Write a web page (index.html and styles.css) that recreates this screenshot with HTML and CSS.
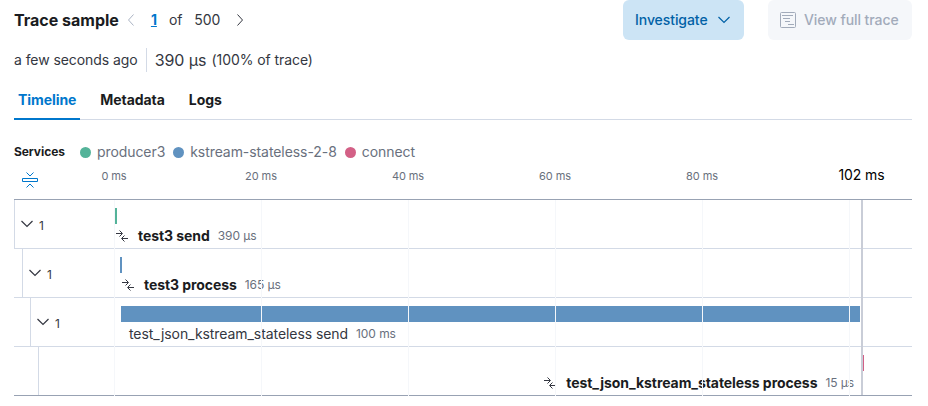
FILE: index.html
```html
<!DOCTYPE html>
<html lang="en">
<head>
<meta charset="utf-8">
<title>Trace sample</title>
<link rel="stylesheet" href="styles.css">
</head>
<body>
<svg width="0" height="0" class="defs">
  <symbol id="down" viewBox="0 0 16 16"><path d="M2.5 5 8 10.5 13.5 5" fill="none" stroke="currentColor" stroke-width="1.2"/></symbol>
  <symbol id="merge" viewBox="0 0 12 12"><path d="M0 3.5h6M3.5.5l3 3-3 3M12 8.5H6M8.500 5.500l-3 3 3 3" fill="none" stroke="currentColor"/></symbol>
</svg>
<main class="panel">
  <header class="head">
    <h2 class="title">Trace sample</h2>
    <nav class="pager">
      <svg class="arrow off" viewBox="0 0 8 14"><path d="M6.500 1.500 1.500 7l5 5.500"/></svg>
      <a class="page">1</a><span class="of">of</span><span class="total">500</span>
      <svg class="arrow" viewBox="0 0 8 14"><path d="m1.500 1.500 5 5.500-5 5.500"/></svg>
    </nav>
    <div class="actions">
      <button class="btn primary">Investigate<svg class="caret"><use href="#down"/></svg></button>
      <button class="btn disabled"><svg class="apm" viewBox="0 0 16 16"><rect x=".5" y=".5" width="15" height="15" rx="1"/><path d="M2 3.500h11M3 6.500h7M5 9.500h5M8 12.500h6"/></svg>View full trace</button>
    </div>
  </header>
  <div class="summary"><span class="ago">a few seconds ago</span><span class="duration">390 μs</span><span>(100% of trace)</span></div>
  <nav class="tabs"><a class="tab active">Timeline</a><a class="tab">Metadata</a><a class="tab">Logs</a></nav>
  <div class="legend">
    <b>Services</b>
    <span class="item"><i class="dot green"></i>producer3</span>
    <span class="item"><i class="dot blue"></i>kstream-stateless-2-8</span>
    <span class="item"><i class="dot pink"></i>connect</span>
  </div>
  <div class="axis">
    <svg class="fold" viewBox="0 0 16 16"><path d="M4.500.5 8 4 11.500.5M4.500 15.500 8 12l3.500 3.500M.5 6.500h15v3H.5z"/></svg>
    <div class="ticks"><span>0 ms</span><span>20 ms</span><span>40 ms</span><span>60 ms</span><span>80 ms</span><span class="end">102 ms</span></div>
  </div>
  <section class="waterfall">
    <div class="row">
      <div class="toggle level0"><svg class="chev"><use href="#down"/></svg><span>1</span></div>
      <div class="span"><div class="bar green" style="margin-left:0;width:3px"></div><div class="label" style="margin-left:2px"><svg class="merge"><use href="#merge"/></svg><b>test3 send</b><small>390 μs</small></div></div>
    </div>
    <div class="row">
      <div class="toggle level1"><svg class="chev"><use href="#down"/></svg><span>1</span></div>
      <div class="span"><div class="bar blue" style="margin-left:6px;width:2px"></div><div class="label" style="margin-left:8px"><svg class="merge"><use href="#merge"/></svg><b>test3 process</b><small>165 μs</small></div></div>
    </div>
    <div class="row">
      <div class="toggle level2"><svg class="chev"><use href="#down"/></svg><span>1</span></div>
      <div class="span"><div class="bar blue" style="margin-left:7px;width:739px"></div><div class="label" style="margin-left:15px"><span class="name">test_json_kstream_stateless send</span><small>100 ms</small></div></div>
    </div>
    <div class="row">
      <div class="toggle level3"></div>
      <div class="span"><div class="bar pink" style="margin-left:748px;width:2px"></div><div class="label right"><svg class="merge"><use href="#merge"/></svg><b>test_json_kstream_stateless process</b><small>15 μs</small></div></div>
    </div>
    <div class="gridlines"><i></i><i></i><i></i><i></i><i></i><i></i></div>
    <div class="marker"></div>
  </section>
</main>
</body>
</html>
```

FILE: styles.css
```css
* { box-sizing: border-box; }
body { margin: 0; background: #fff; color: #343741; font: 14px/20px Inter, "Liberation Sans", sans-serif; letter-spacing: -0.005em; }
svg { display: block; flex: none; fill: none; stroke: currentColor; }
.defs { position: absolute; }
.panel { width: 898px; margin-left: 14px; }
.head { display: flex; height: 40px; align-items: center; }
.title { margin: 0; font-size: 16px; font-weight: 700; color: #1a1c21; letter-spacing: 0; }
.pager { display: flex; align-items: center; margin-left: 8px; }
.arrow { width: 8px; height: 14px; }
.arrow.off { color: #abb4c4; }
.page { margin-left: 16px; color: #0077cc; font-weight: 700; text-decoration: underline; }
.of { margin-left: 12px; }
.total { margin: 0 16px 0 12px; }
.actions { display: flex; gap: 24px; margin-left: auto; }
.btn { display: flex; align-items: center; height: 40px; border: 0; border-radius: 6px; font: 500 14px/20px Inter, sans-serif; padding: 0 12px; letter-spacing: -0.005em; }
.primary { width: 121px; justify-content: space-between; background: #cce4f5; color: #0061a6; }
.disabled { width: 144px; gap: 8px; background: #f5f7fa; color: #a2abba; }
.caret, .apm { width: 16px; height: 16px; }
.summary { display: flex; align-items: center; height: 40px; }
.ago { height: 24px; line-height: 24px; padding-right: 8px; margin-right: 8px; border-right: 1px solid #d3dae6; }
.duration { font-size: 16px; margin-right: 5px; }
.tabs { display: flex; height: 40px; gap: 16px; border-bottom: 1px solid #d3dae6; }
.tab { height: 40px; padding: 0 4px; line-height: 40px; font-weight: 700; color: #1a1c21; }
.tab.active { color: #0077cc; border-bottom: 2px solid #0077cc; }
.legend { display: flex; align-items: center; height: 24px; margin-top: 20px; color: #69707d; }
.legend b { font-size: 12px; color: #1a1c21; margin-right: 15px; }
.item { display: flex; align-items: center; margin-right: 8px; }
.dot { width: 11px; height: 11px; margin-right: 6px; border-radius: 50%; }
.green { background: #54b399; }
.blue { background: #6092c0; }
.pink { background: #d36086; }
.axis { display: flex; height: 35px; padding-left: 8px; }
.fold { width: 16px; height: 16px; margin-top: 8px; color: #0077cc; }
.ticks { display: flex; margin-left: 2.500px; color: #69707d; font-size: 11px; line-height: 24px; }
.ticks span { width: 147px; text-align: center; }
.ticks .end { width: 60px; margin-left: 56px; color: #000; font-size: 14px; line-height: 22px; }
.waterfall { position: relative; border-top: 1px solid #98a2b3; }
.row { display: flex; height: 49px; border-bottom: 1px solid #d3dae6; }
.row:nth-child(4) { border-color: #98a2b3; }
.toggle { display: flex; width: 100px; padding: 16px 0 0 5px; border-left: 1px solid #d3dae6; }
.level1 { width: 92px; margin-left: 8px; }
.level2 { width: 84px; margin-left: 16px; }
.level3 { width: 76px; margin-left: 24px; }
.chev { width: 16px; height: 16px; margin-left: -1px; }
.toggle span { margin-left: 4px; font-size: 12px; }
.span { width: 798px; padding-top: 8px; }
.bar { height: 16px; }
.label { display: flex; align-items: center; height: 24px; white-space: nowrap; }
.label.right { width: 740px; justify-content: flex-end; }
.label b { color: #1a1c21; }
.merge { width: 12px; height: 12px; margin-right: 10px; }
.label small { margin-left: 8px; font-size: 12px; color: #69707d; }
.gridlines { position: absolute; inset: 0 0 0 100px; display: flex; gap: 146px; pointer-events: none; }
.gridlines i { width: 1px; background: #f5f7fa; }
.marker { position: absolute; left: 847px; top: 0; bottom: 1px; width: 2px; background: #c9cdd7; }
```
